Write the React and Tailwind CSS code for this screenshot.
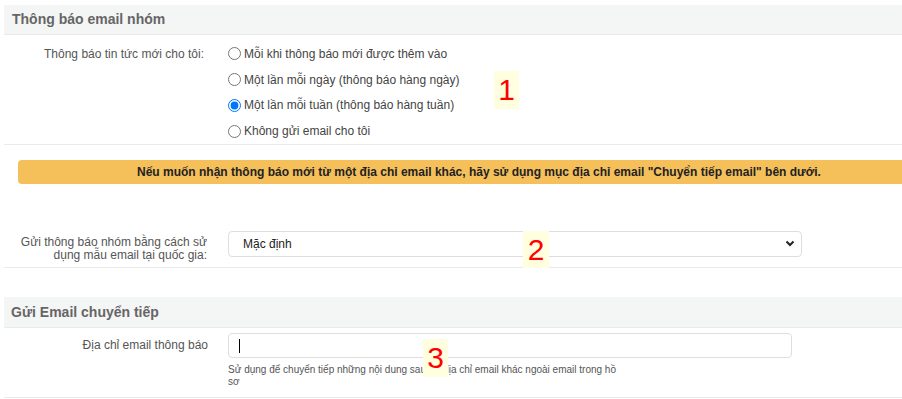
import React from "react";

const font = { fontFamily: '"Liberation Sans", Arial, sans-serif' };

function Badge({ n, className }) {
  return (
    <div
      className={`absolute bg-[#ffffe0] text-[#ff0000] text-[30px] leading-none flex items-center justify-center ${className}`}
    >
      {n}
    </div>
  );
}

function Radio({ label, checked }) {
  return (
    <label className="flex items-center h-[26px] text-[12px] text-[#444]">
      <input
        type="radio"
        name="freq"
        defaultChecked={checked}
        className="w-[13px] h-[13px] m-0 mr-[3px] ml-[1px]"
      />
      <span>{label}</span>
    </label>
  );
}

export default function App() {
  return (
    <div
      className="relative w-[902px] h-[399px] overflow-hidden bg-white"
      style={font}
    >
      <div className="pl-[4px] pt-[5px]">
        {/* Section 1 header */}
        <div className="h-[30px] bg-[#f4f5f5] border-b border-[#e9ebeb] flex items-center pl-[8px]">
          <span className="text-[14px] font-bold text-[#666]">
            Thông báo email nhóm
          </span>
        </div>

        {/* Radios row */}
        <div className="flex border-b border-[#e9ebeb] pt-[6px] h-[110px]">
          <div className="w-[200px] text-right text-[12px] text-[#555] h-[26px] flex items-center justify-end">
            Thông báo tin tức mới cho tôi:
          </div>
          <div className="pl-[23px] flex flex-col">
            <Radio label="Mỗi khi thông báo mới được thêm vào" />
            <Radio label="Một lần mỗi ngày (thông báo hàng ngày)" />
            <Radio label="Một lần mỗi tuần (thông báo hàng tuần)" checked />
            <Radio label="Không gửi email cho tôi" />
          </div>
        </div>

        {/* Banner */}
        <div className="mt-[15px] ml-[14px] w-[922px] h-[24px] rounded-[4px] bg-[#f5bf5a] flex items-center justify-center text-[12px] font-bold text-[#222]">
          Nếu muốn nhận thông báo mới từ một địa chỉ email khác, hãy sử dụng mục địa chỉ email "Chuyển tiếp email" bên dưới.
        </div>

        {/* Select row */}
        <div className="mt-[41px] flex border-b border-[#e9ebeb] pt-[6px] h-[43px]">
          <div className="w-[203px] text-right text-[12px] leading-[13px] text-[#555] pt-[5px]">
            Gửi thông báo nhóm bằng cách sử
            <br />
            dụng mẫu email tại quốc gia:
          </div>
          <div className="pl-[21px]">
            <div className="relative w-[574px] h-[26px]">
              <select className="appearance-none w-full h-full border border-[#dedede] rounded-[4px] bg-white pl-[14px] text-[12px] text-[#222] outline-none">
                <option>Mặc định</option>
              </select>
              <svg
                className="absolute right-[7px] top-[9px] pointer-events-none"
                width="10"
                height="7"
                viewBox="0 0 10 7"
              >
                <path
                  d="M1.5 1.5 L5 5 L8.5 1.5"
                  fill="none"
                  stroke="#222"
                  strokeWidth="2"
                />
              </svg>
            </div>
          </div>
        </div>

        {/* Section 2 header */}
        <div className="mt-[29px] h-[31px] bg-[#f4f5f5] border-b border-[#e9ebeb] flex items-center pl-[7px]">
          <span className="text-[14px] font-bold text-[#666]">
            Gửi Email chuyển tiếp
          </span>
        </div>

        {/* Input row */}
        <div className="flex border-b border-[#e9ebeb] pt-[5px] h-[70px]">
          <div className="w-[204px] text-right text-[12px] text-[#555] pt-[3px]">
            Địa chỉ email thông báo
          </div>
          <div className="pl-[20px]">
            <div className="w-[564px] h-[25px] border border-[#dedede] rounded-[4px] bg-white flex items-center pl-[10px]">
              <span className="w-[1px] h-[14px] bg-black" />
            </div>
            <div className="w-[395px] mt-[6px] text-[10px] leading-[12px] text-[#555]">
              Sử dụng để chuyển tiếp những nội dung sau tới địa chỉ email khác ngoài email trong hồ sơ
            </div>
          </div>
        </div>
      </div>

      <Badge n="1" className="left-[494px] top-[71px] w-[25px] h-[38px]" />
      <Badge n="2" className="left-[523px] top-[231px] w-[26px] h-[37px]" />
      <Badge n="3" className="left-[423px] top-[339px] w-[25px] h-[38px]" />
    </div>
  );
}
